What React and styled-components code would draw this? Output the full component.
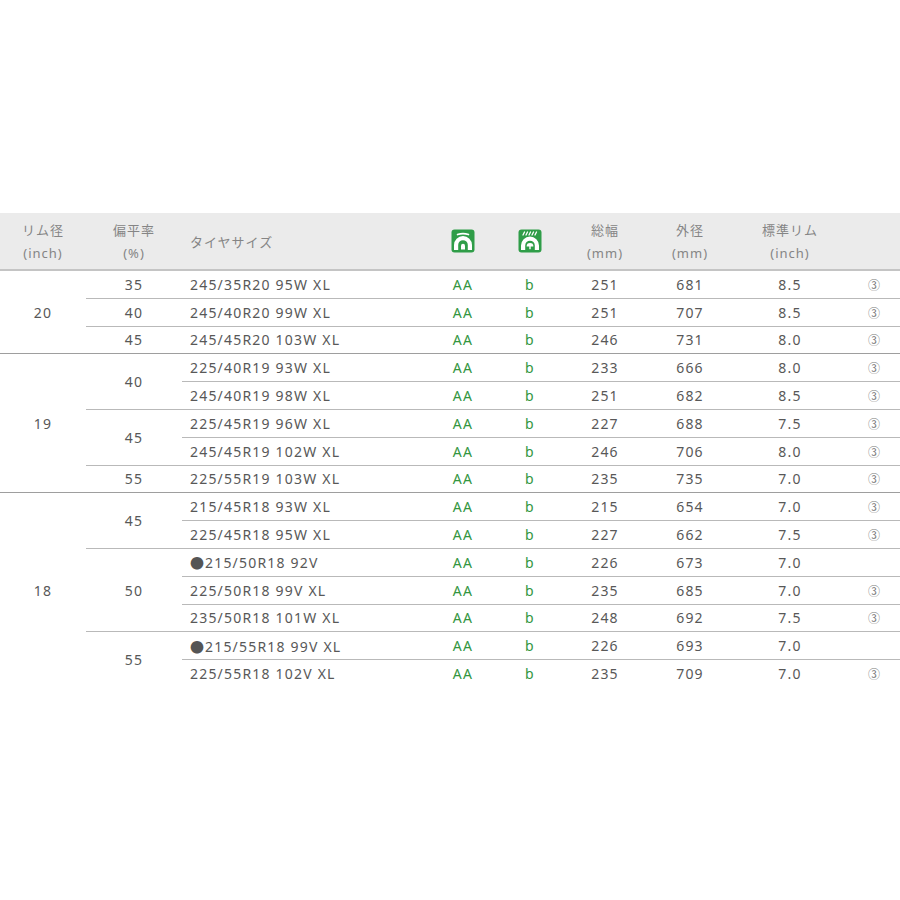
import React from 'react'
import styled, { createGlobalStyle } from 'styled-components'

const GlobalStyle = createGlobalStyle`
  body {
    margin: 0;
    background: #fff;
    font-family: "Noto Sans", "Noto Sans CJK JP", sans-serif;
  }
`

const Page = styled.div`
  padding-top: 213px;
  width: 900px;
`

const Table = styled.table`
  width: 900px;
  border-collapse: collapse;
  table-layout: fixed;
  color: #585858;
  font-size: 14px;
  letter-spacing: 1.2px;
`

const HeadRow = styled.tr`
  background: #ebebeb;
  height: 57px;
`

const HeadCell = styled.th`
  font-weight: 400;
  color: #858585;
  font-size: 13px;
  letter-spacing: 1px;
  line-height: 23px;
  text-align: ${(p) => (p.$left ? 'left' : 'center')};
  padding: 2px 0 0 ${(p) => (p.$left ? '8px' : '0')};
  border-bottom: 2px solid #c4c4c4;
  vertical-align: middle;
`

const IconBox = styled.div`
  display: flex;
  justify-content: center;
  margin-top: -3px;
`

const Cell = styled.td`
  height: 26.8px;
  padding: 0 0 0 ${(p) => (p.$left ? '8px' : '0')};
  text-align: ${(p) => (p.$left ? 'left' : 'center')};
  vertical-align: middle;
  white-space: nowrap;
  border-top: ${(p) =>
    p.$edge === 'rim' ? '1px solid #9e9e9e' : p.$edge ? '1px solid #b9b9b9' : 'none'};
  color: ${(p) => (p.$green ? '#33963f' : 'inherit')};
`

const Mark = styled.span`
  font-family: "Noto Sans CJK JP", sans-serif;
  font-size: 12px;
  color: #7a7a7a;
  letter-spacing: 0;
`

const Dot = styled.span`
  color: #555;
  font-size: 14px;
  letter-spacing: 0;
  margin-right: 1px;
`

const FuelIcon = () => (
  <svg width="24" height="24" viewBox="0 0 24 24">
    <rect x="0.5" y="0.5" width="23" height="23" rx="3" fill="#2f9d48" />
    <path d="M6.5 5.6 Q12 3.6 17.5 5.6" stroke="#fff" strokeWidth="1.6" fill="none" strokeLinecap="round" />
    <path
      d="M3 21 V16 A9 9 0 0 1 21 16 V21 H16.8 V16 A4.8 4.8 0 0 0 7.2 16 V21 Z"
      fill="#fff"
    />
    <path d="M10 20.5 V16.8 A2 2 0 0 1 14 16.8 V20.5 Z" fill="#fff" />
  </svg>
)

const WetIcon = () => (
  <svg width="24" height="24" viewBox="0 0 24 24">
    <rect x="0.5" y="0.5" width="23" height="23" rx="3" fill="#2f9d48" />
    <g stroke="#fff" strokeWidth="1.3" strokeLinecap="round">
      <line x1="5" y1="6" x2="6.5" y2="3" />
      <line x1="8" y1="6" x2="9.5" y2="3" />
      <line x1="11" y1="6" x2="12.5" y2="3" />
      <line x1="14" y1="6" x2="15.5" y2="3" />
      <line x1="17" y1="6" x2="18.5" y2="3" />
    </g>
    <path
      d="M3 21 V16.5 A9 9 0 0 1 21 16.5 V21 H16.8 V16.5 A4.8 4.8 0 0 0 7.2 16.5 V21 Z"
      fill="#fff"
    />
    <path d="M8.6 17.4 A3.4 3.4 0 0 1 15.4 17.4 Z" fill="#fff" />
    <rect x="11.3" y="17" width="1.4" height="3.2" fill="#fff" />
  </svg>
)

const data = [
  {
    rim: '20',
    groups: [
      { ar: '35', rows: [['245/35R20 95W XL', '251', '681', '8.5', true]] },
      { ar: '40', rows: [['245/40R20 99W XL', '251', '707', '8.5', true]] },
      { ar: '45', rows: [['245/45R20 103W XL', '246', '731', '8.0', true]] },
    ],
  },
  {
    rim: '19',
    groups: [
      {
        ar: '40',
        rows: [
          ['225/40R19 93W XL', '233', '666', '8.0', true],
          ['245/40R19 98W XL', '251', '682', '8.5', true],
        ],
      },
      {
        ar: '45',
        rows: [
          ['225/45R19 96W XL', '227', '688', '7.5', true],
          ['245/45R19 102W XL', '246', '706', '8.0', true],
        ],
      },
      { ar: '55', rows: [['225/55R19 103W XL', '235', '735', '7.0', true]] },
    ],
  },
  {
    rim: '18',
    groups: [
      {
        ar: '45',
        rows: [
          ['215/45R18 93W XL', '215', '654', '7.0', true],
          ['225/45R18 95W XL', '227', '662', '7.5', true],
        ],
      },
      {
        ar: '50',
        rows: [
          ['215/50R18 92V', '226', '673', '7.0', false, true],
          ['225/50R18 99V XL', '235', '685', '7.0', true],
          ['235/50R18 101W XL', '248', '692', '7.5', true],
        ],
      },
      {
        ar: '55',
        rows: [
          ['215/55R18 99V XL', '226', '693', '7.0', false, true],
          ['225/55R18 102V XL', '235', '709', '7.0', true],
        ],
      },
    ],
  },
]

const buildRows = () => {
  const out = []
  data.forEach((rimGroup, ri) => {
    const rimSpan = rimGroup.groups.reduce((n, g) => n + g.rows.length, 0)
    rimGroup.groups.forEach((g, gi) => {
      g.rows.forEach((r, idx) => {
        const first = ri === 0 && gi === 0 && idx === 0
        const rimStart = gi === 0 && idx === 0
        let edge = 'row'
        if (first) edge = null
        else if (rimStart) edge = 'rim'
        const [size, width, dia, rimW, mark, dot] = r
        out.push(
          <tr key={size}>
            {rimStart && (
              <Cell rowSpan={rimSpan} $edge={edge}>
                {rimGroup.rim}
              </Cell>
            )}
            {idx === 0 && (
              <Cell rowSpan={g.rows.length} $edge={edge}>
                {g.ar}
              </Cell>
            )}
            <Cell $left $edge={edge}>
              {dot && <Dot>●</Dot>}
              {size}
            </Cell>
            <Cell $green $edge={edge}>AA</Cell>
            <Cell $green $edge={edge}>b</Cell>
            <Cell $edge={edge}>{width}</Cell>
            <Cell $edge={edge}>{dia}</Cell>
            <Cell $edge={edge}>{rimW}</Cell>
            <Cell $edge={edge}>{mark && <Mark>③</Mark>}</Cell>
          </tr>
        )
      })
    })
  })
  return out
}

const widths = [86, 96, 246, 70, 64, 86, 84, 116, 52]

const App = () => (
  <Page>
    <GlobalStyle />
    <Table>
      <colgroup>
        {widths.map((w, i) => (
          <col key={i} style={{ width: w }} />
        ))}
      </colgroup>
      <thead>
        <HeadRow>
          <HeadCell>
            リム径
            <br />
            (inch)
          </HeadCell>
          <HeadCell>
            偏平率
            <br />
            (%)
          </HeadCell>
          <HeadCell $left>タイヤサイズ</HeadCell>
          <HeadCell>
            <IconBox>
              <FuelIcon />
            </IconBox>
          </HeadCell>
          <HeadCell>
            <IconBox>
              <WetIcon />
            </IconBox>
          </HeadCell>
          <HeadCell>
            総幅
            <br />
            (mm)
          </HeadCell>
          <HeadCell>
            外径
            <br />
            (mm)
          </HeadCell>
          <HeadCell>
            標準リム
            <br />
            (inch)
          </HeadCell>
          <HeadCell />
        </HeadRow>
      </thead>
      <tbody>{buildRows()}</tbody>
    </Table>
  </Page>
)

export default App
